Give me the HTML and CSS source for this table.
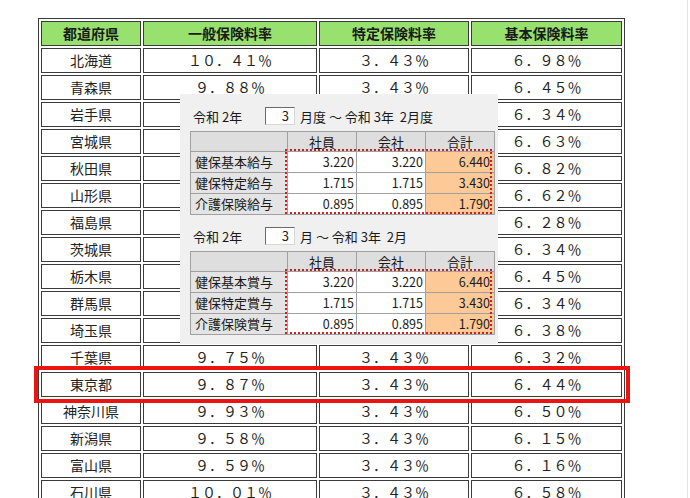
FILE: index.html
```html
<!DOCTYPE html>
<html lang="ja">
<head>
<meta charset="utf-8">
<link rel="stylesheet" href="styles.css">
</head>
<body>
<div class="page">
  <table class="rates">
    <thead>
      <tr><th class="c1">都道府県</th><th class="c2">一般保険料率</th><th class="c3">特定保険料率</th><th class="c4">基本保険料率</th></tr>
    </thead>
    <tbody>
      <tr><td>北海道</td><td>１０．４１％</td><td>３．４３％</td><td>６．９８％</td></tr>
      <tr><td>青森県</td><td>９．８８％</td><td>３．４３％</td><td>６．４５％</td></tr>
      <tr><td>岩手県</td><td>９．７７％</td><td>３．４３％</td><td>６．３４％</td></tr>
      <tr><td>宮城県</td><td>１０．０６％</td><td>３．４３％</td><td>６．６３％</td></tr>
      <tr><td>秋田県</td><td>１０．２５％</td><td>３．４３％</td><td>６．８２％</td></tr>
      <tr><td>山形県</td><td>１０．０５％</td><td>３．４３％</td><td>６．６２％</td></tr>
      <tr><td>福島県</td><td>９．７１％</td><td>３．４３％</td><td>６．２８％</td></tr>
      <tr><td>茨城県</td><td>９．７７％</td><td>３．４３％</td><td>６．３４％</td></tr>
      <tr><td>栃木県</td><td>９．８８％</td><td>３．４３％</td><td>６．４５％</td></tr>
      <tr><td>群馬県</td><td>９．７７％</td><td>３．４３％</td><td>６．３４％</td></tr>
      <tr><td>埼玉県</td><td>９．８１％</td><td>３．４３％</td><td>６．３８％</td></tr>
      <tr><td>千葉県</td><td>９．７５％</td><td>３．４３％</td><td>６．３２％</td></tr>
      <tr><td>東京都</td><td>９．８７％</td><td>３．４３％</td><td>６．４４％</td></tr>
      <tr><td>神奈川県</td><td>９．９３％</td><td>３．４３％</td><td>６．５０％</td></tr>
      <tr><td>新潟県</td><td>９．５８％</td><td>３．４３％</td><td>６．１５％</td></tr>
      <tr><td>富山県</td><td>９．５９％</td><td>３．４３％</td><td>６．１６％</td></tr>
      <tr><td>石川県</td><td>１０．０１％</td><td>３．４３％</td><td>６．５８％</td></tr>
    </tbody>
  </table>

  <div class="highlight"></div>

  <div class="panel">
    <div class="period">
      <span class="lbl">令和 2年</span>
      <span class="num-input">3</span>
      <span class="rest">月度 ～ 令和 3年&nbsp; 2月度</span>
    </div>
    <div class="grid-wrap">
      <table class="mini">
        <tr class="head"><th class="m1"></th><th class="m2">社員</th><th class="m3">会社</th><th class="m4">合計</th></tr>
        <tr><th>健保基本給与</th><td>3.220</td><td>3.220</td><td class="sum">6.440</td></tr>
        <tr><th>健保特定給与</th><td>1.715</td><td>1.715</td><td class="sum">3.430</td></tr>
        <tr><th>介護保険給与</th><td>0.895</td><td>0.895</td><td class="sum">1.790</td></tr>
      </table>
      <div class="dots"></div>
    </div>

    <div class="period second">
      <span class="lbl">令和 2年</span>
      <span class="num-input">3</span>
      <span class="rest">月 ～ 令和 3年&nbsp; 2月</span>
    </div>
    <div class="grid-wrap">
      <table class="mini">
        <tr class="head"><th class="m1"></th><th class="m2">社員</th><th class="m3">会社</th><th class="m4">合計</th></tr>
        <tr><th>健保基本賞与</th><td>3.220</td><td>3.220</td><td class="sum">6.440</td></tr>
        <tr><th>健保特定賞与</th><td>1.715</td><td>1.715</td><td class="sum">3.430</td></tr>
        <tr><th>介護保険賞与</th><td>0.895</td><td>0.895</td><td class="sum">1.790</td></tr>
      </table>
      <div class="dots"></div>
    </div>
  </div>
</div>
</body>
</html>
```

FILE: styles.css
```css
html, body {
  margin: 0;
  padding: 0;
  background: #ffffff;
}

body {
  font-family: "Noto Sans CJK JP", "Noto Sans", sans-serif;
  color: #222;
}

.page {
  position: relative;
  width: 688px;
  height: 498px;
  overflow: hidden;
  border-right: 1px solid #e2e2e2;
  box-sizing: border-box;
  padding: 18px 0 0 38px;
}

.rates {
  border-collapse: separate;
  border-spacing: 2px;
  border: 1px solid #3a3a3a;
  table-layout: fixed;
}

.rates th,
.rates td {
  border: 1px solid #3a3a3a;
  height: 23px;
  padding: 0;
  text-align: center;
  font-size: 14px;
  line-height: 23px;
  white-space: nowrap;
}

.rates th {
  background: #98e16e;
  font-weight: bold;
  color: #1a1a1a;
}

.rates .c1 { width: 98px; }
.rates .c2 { width: 172px; }
.rates .c3 { width: 148px; }
.rates .c4 { width: 149px; }

.highlight {
  position: absolute;
  left: 34px;
  top: 366px;
  width: 596px;
  height: 37px;
  box-sizing: border-box;
  border: 4px solid #ea1410;
}

.panel {
  position: absolute;
  left: 180px;
  top: 94px;
  width: 318px;
  height: 250px;
  background: #f0f0f0;
  box-sizing: border-box;
  padding: 13px 0 0 10px;
  font-size: 13px;
  color: #1a1a1a;
}

.period {
  display: flex;
  align-items: center;
  height: 18px;
  padding-left: 3px;
}

.period.second {
  margin-top: 12px;
}

.period .lbl {
  width: 72px;
}

.num-input {
  width: 30px;
  height: 18px;
  box-sizing: border-box;
  background: #fff;
  border-top: 1px solid #6a6a6a;
  border-left: 1px solid #6a6a6a;
  border-right: 1px solid #d8d8d8;
  border-bottom: 1px solid #d8d8d8;
  text-align: right;
  padding-right: 5px;
  line-height: 16px;
}

.period .rest {
  margin-left: 5px;
}

.grid-wrap {
  position: relative;
  margin-top: 6px;
  width: 301px;
}

.mini {
  border-collapse: collapse;
  table-layout: fixed;
  width: 301px;
  font-size: 13px;
}

.mini th,
.mini td {
  border: 1px solid #a0a0a0;
  padding: 0;
  height: 20px;
  line-height: 18px;
  white-space: nowrap;
}

.mini .head th {
  background: #dedede;
  font-weight: normal;
  text-align: center;
  height: 19px;
}

.mini th {
  background: #e4e4e4;
  font-weight: normal;
  text-align: left;
  padding-left: 4px;
}

.mini .head th { padding-left: 0; }

.mini .m1 { width: 96px; }
.mini .m2 { width: 68px; }
.mini .m3 { width: 68px; }
.mini .m4 { width: 68px; }

.mini td {
  background: #fff;
  text-align: right;
  padding-right: 2px;
  font-size: 12.5px;
}

.mini td.sum {
  background: #fdc997;
  padding-right: 4px;
}

.dots {
  position: absolute;
  left: 95px;
  top: 18px;
  width: 207px;
  height: 65px;
  box-sizing: border-box;
  border: 2px dotted #cc1f1f;
}
```
